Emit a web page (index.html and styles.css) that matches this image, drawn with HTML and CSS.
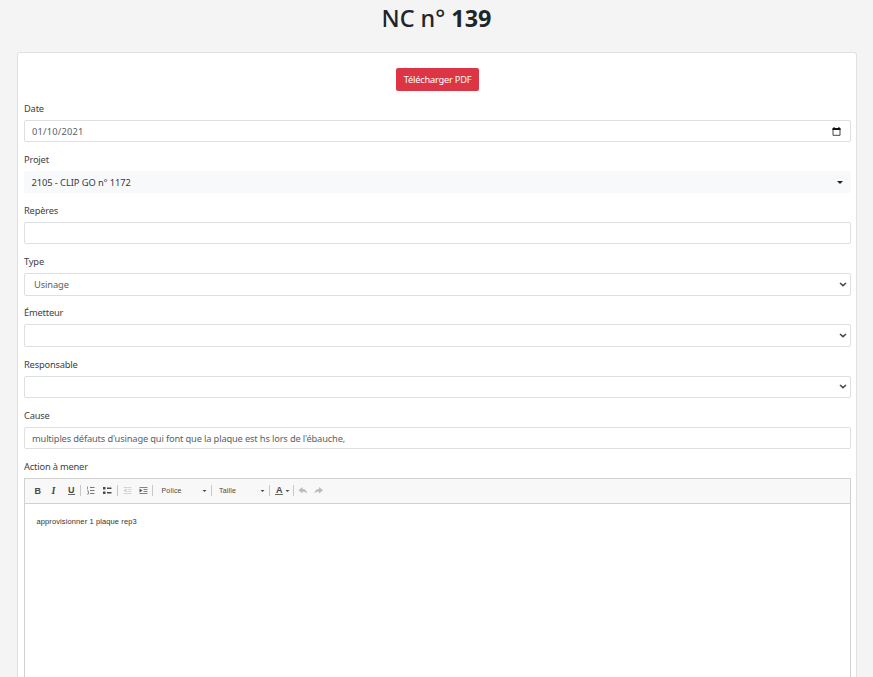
FILE: index.html
```html
<!DOCTYPE html>
<html lang="fr">
<head>
<meta charset="utf-8">
<title>NC n° 139</title>
<link rel="stylesheet" href="styles.css">
</head>
<body>
<h1 class="title">NC n° <strong>139</strong></h1>
<main class="card">
  <div class="actions"><button class="btn" type="button"><span>Télécharger PDF</span></button></div>
  <div class="group"><div class="label"><span>Date</span></div>
    <div class="control"><span class="date">01/10/2021</span>
      <svg class="calendar" viewBox="0 0 9 9"><path d="M1 2v6.300h7V2" fill="none" stroke="#444" stroke-width="1"/><path d="M.5 1h8v2h-8zM1.500 0h1v1h-1zM6.500 0h1v1h-1z" fill="#111"/></svg></div></div>
  <div class="group"><div class="label"><span>Projet</span></div>
    <div class="control picker"><span class="project">2105 - CLIP GO n° 1172</span>
      <svg class="caret" viewBox="0 0 6 3"><path d="M0 0h6L3 3z" fill="#212529"/></svg></div></div>
  <div class="group"><div class="label"><span>Repères</span></div>
    <div class="control"></div></div>
  <div class="group"><div class="label"><span>Type</span></div>
    <div class="control select"><span class="type">Usinage</span>
      <svg class="chevron" viewBox="0 0 8 5"><path d="M1 1l3 2.600L7 1" fill="none" stroke="#444a50" stroke-width="1.600"/></svg></div></div>
  <div class="group"><div class="label"><span>Émetteur</span></div>
    <div class="control select"><span></span>
      <svg class="chevron" viewBox="0 0 8 5"><path d="M1 1l3 2.600L7 1" fill="none" stroke="#444a50" stroke-width="1.600"/></svg></div></div>
  <div class="group"><div class="label"><span>Responsable</span></div>
    <div class="control select"><span></span>
      <svg class="chevron" viewBox="0 0 8 5"><path d="M1 1l3 2.600L7 1" fill="none" stroke="#444a50" stroke-width="1.600"/></svg></div></div>
  <div class="group"><div class="label"><span>Cause</span></div>
    <div class="control"><span class="cause">multiples défauts d'usinage qui font que la plaque est hs lors de l'ébauche,</span></div></div>
  <div class="label"><span>Action à mener</span></div>
  <section class="editor">
    <svg class="toolbar" viewBox="0 0 825 24">
      <g class="glyphs">
        <text x="9.500" y="14.800" font-weight="700">B</text>
        <text x="26.500" y="14.800" font-weight="700" font-style="italic" font-family="Liberation Serif, serif" font-size="10">I</text>
        <text x="43" y="14" font-weight="700">U</text>
        <text x="251" y="14" font-weight="700">A</text>
      </g>
      <path d="M43 15.500h7M250 15.500h8" stroke="#666"/>
      <path d="M55.500 6v11M92.500 6v11M127.500 6v11M186.500 6v11M244.500 6v11M268.500 6v11" stroke="#c8c8c8"/>
      <g fill="none" stroke="#777">
        <path d="M65 8.500h4.500M65 11.500h4.500M65 14.500h4.500"/>
        <path d="M62.500 7.500v3M62 12h1.500v3H62" stroke-width=".8"/>
      </g>
      <path d="M82 9.300h4.500M82 13.800h4.500" stroke="#484848" stroke-width="1.400"/>
      <path d="M78 8h2.500v2.500H78zM78 12.500h2.500V15H78z" fill="#484848"/>
      <g fill="none" stroke="#ccc"><path d="M98.500 8.500h8M102.500 10.500h4M102.500 12.500h4M98.500 14.500h8" stroke-width=".8"/><path d="M101.500 9.500v4l-3-2z" fill="#ccc" stroke="none"/></g>
      <g fill="none" stroke="#666"><path d="M114.500 8.500h8M118.500 10.500h4M118.500 12.500h4M114.500 14.500h8" stroke-width=".8"/><path d="M114.500 9.500v4l3-2z" fill="#555" stroke="none"/></g>
      <g class="names"><text x="136.500" y="13.800" textLength="20">Police</text><text x="194" y="13.800" textLength="17">Taille</text></g>
      <path d="M177.500 11h4l-2 2zM235.500 11h4l-2 2zM260.500 11h4l-2 2z" fill="#484848"/>
      <path d="M273.500 11.300l4-3.300v2q4 0 4.500 4.500-1.500-2-4.500-2v2z" fill="#bbb"/>
      <path d="M298 11.300l-4-3.300v2q-4 0-4.500 4.500 1.500-2 4.500-2v2z" fill="#bbb"/>
    </svg>
    <div class="content"><span>approvisionner 1 plaque rep3</span></div>
  </section>
</main>
</body>
</html>
```
FILE: styles.css
```css
* { box-sizing: border-box; }
html, body { height: 100%; }
body {
  display: flex;
  flex-direction: column;
  margin: 0;
  overflow: hidden;
  background: #f4f4f4;
  color: #3c4146;
  font-family: "Noto Sans", "Open Sans", sans-serif;
  font-size: 9.3px;
}
.title {
  flex: none;
  margin: 0;
  height: 52.400px;
  padding-top: 3px;
  color: #212529;
  font-size: 23.400px;
  font-weight: 500;
  line-height: 30px;
  text-align: center;
}
.title strong { font-weight: 700; }
.card {
  flex: 1;
  min-height: 0;
  display: flex;
  flex-direction: column;
  margin: 0 16px 0 17px;
  padding: 15px 5px 0 6px;
  border: 1px solid #e0e1e2;
  border-bottom: 0;
  border-radius: 3px 3px 0 0;
  background: #fff;
}
.actions { flex: none; display: flex; justify-content: center; height: 32.200px; }
.btn {
  width: 83px;
  height: 22.500px;
  padding: 0;
  border: 0;
  border-radius: 2px;
  background: #dc3545;
  color: #fff;
  font: 9.3px/22px "Noto Sans", sans-serif;
  letter-spacing: -.22px;
  white-space: nowrap;
}
.group { flex: none; height: 51.200px; }
.label { flex: none; height: 19px; line-height: 15px; letter-spacing: -.18px; }
.control {
  display: flex;
  align-items: center;
  justify-content: space-between;
  height: 22.500px;
  padding: 1px 8px 0 7px;
  border: 1px solid #dce0e3;
  border-radius: 2px;
  color: #5a6167;
  white-space: nowrap;
}
.date { letter-spacing: .2px; }
.project { letter-spacing: -.07px; }
.cause { letter-spacing: -.155px; }
.picker { padding-top: 0; padding-left: 6.500px; border-color: #f8f9fa; background: #f8f9fa; color: #343a40; }
.select { padding-top: 0; padding-left: 9px; padding-right: 3px; }
.type { padding-top: 1px; letter-spacing: -.1px; }
.calendar { width: 9px; height: 9px; margin-right: 1px; }
.caret { width: 6px; height: 3px; margin-right: -1px; }
.chevron { width: 8px; height: 5px; }
.editor { flex: 1; min-height: 0; border: 1px solid #d1d1d1; border-bottom: 0; }
.toolbar {
  display: block;
  width: 100%;
  height: 25px;
  border-bottom: 1px solid #d1d1d1;
  background: #f8f8f8;
}
.glyphs { fill: #484848; font: 9px "Liberation Sans", sans-serif; }
.names { fill: #484848; font: 7px "Liberation Sans", sans-serif; }
.content {
  padding: 12px 11.500px;
  color: #333;
  font: 7.500px/12px "Liberation Sans", sans-serif;
  letter-spacing: .11px;
}
```
